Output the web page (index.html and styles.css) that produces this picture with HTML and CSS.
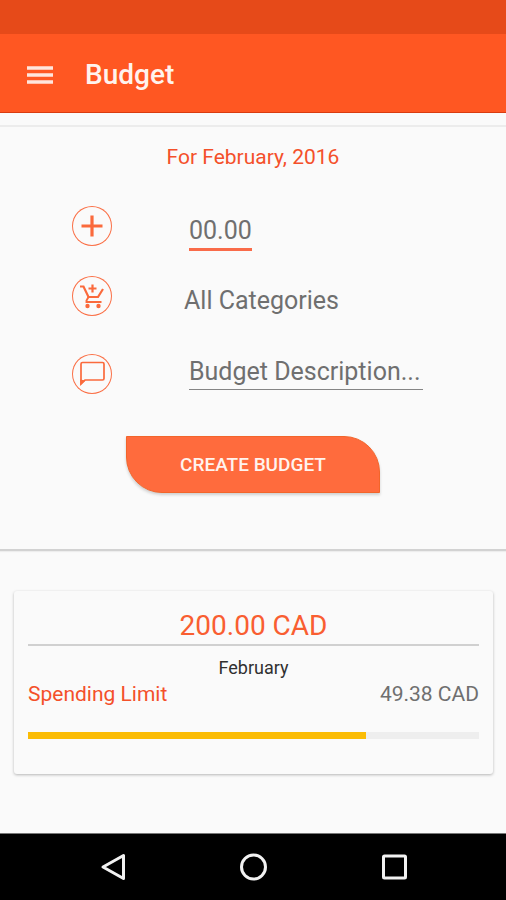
FILE: index.html
```html
<!DOCTYPE html>
<html lang="en">
<head>
<meta charset="utf-8">
<meta name="viewport" content="width=device-width, initial-scale=1">
<title>Budget</title>
<link rel="stylesheet" href="styles.css">
</head>
<body>
<div class="status-bar"></div>
<header class="app-bar">
  <button class="menu-button" type="button" aria-label="Open menu">
    <svg width="28" height="20" viewBox="0 0 28 20"><path d="M1 3h26M1 10h26M1 17h26" stroke="#ffe6dd" stroke-width="3.4"/></svg>
  </button>
  <h1 class="app-title">Budget</h1>
</header>
<main class="content">
  <form class="budget-form">
    <h2 class="form-title">For February, 2016</h2>
    <div class="fields">
      <div class="field field-amount">
        <label class="field-icon" for="amount" aria-label="Amount">
          <svg width="40" height="40" viewBox="0 0 40 40"><path d="M20 9.5v21M9.5 20h21" stroke-width="3.2"/></svg>
        </label>
        <input class="text-input amount-input" id="amount" type="text" inputmode="decimal" placeholder="00.00">
      </div>
      <div class="field field-category">
        <label class="field-icon" for="category" aria-label="Category">
          <svg width="40" height="40" viewBox="0 0 40 40">
            <path d="M8 10.500h3.500l5 10.500h9.500l5-8" stroke-width="2.200"/>
            <path d="M16.500 21l-2 3.500v1.500h15" stroke-width="1.900"/>
            <path d="M20.500 8.500v8M16.500 12.500h8" stroke-width="2.200"/>
            <circle class="wheel" cx="15.500" cy="30" r="2.200"/><circle class="wheel" cx="26.500" cy="30" r="2.200"/>
          </svg>
        </label>
        <select class="category-select" id="category"><option>All Categories</option></select>
      </div>
      <div class="field">
        <label class="field-icon" for="description" aria-label="Description">
          <svg width="40" height="40" viewBox="0 0 40 40"><path d="M9 30V10q0-1.500 1.500-1.500h20q1.500 0 1.500 1.500v14.500q0 1.500-1.500 1.500H13z" stroke-width="1.700"/><path class="wheel" d="M8.200 25.500v6l5.500-5z"/></svg>
        </label>
        <input class="text-input description-input" id="description" type="text" placeholder="Budget Description...">
      </div>
    </div>
    <button class="create-button" type="button">CREATE BUDGET</button>
  </form>
  <section class="budget-card">
    <h2 class="card-total">200.00 CAD</h2>
    <p class="card-month">February</p>
    <div class="card-limit"><span class="limit-label">Spending Limit</span><span class="limit-value">49.38 CAD</span></div>
    <div class="progress" role="progressbar" aria-label="Budget spent" aria-valuenow="75" aria-valuemin="0" aria-valuemax="100"><div class="progress-fill" style="width: 75%"></div></div>
  </section>
</main>
<nav class="system-nav" aria-label="System">
  <button class="nav-button" type="button" aria-label="Back"><svg width="30" height="30" viewBox="0 0 30 30"><path d="M26.500 3.500v23L6 15z"/></svg></button>
  <button class="nav-button" type="button" aria-label="Home"><svg width="30" height="30" viewBox="0 0 30 30"><circle cx="15.500" cy="15" r="12"/></svg></button>
  <button class="nav-button" type="button" aria-label="Recent apps"><svg width="30" height="30" viewBox="0 0 30 30"><rect x="4.500" y="4" width="22" height="22" rx="1"/></svg></button>
</nav>
</body>
</html>
```
FILE: styles.css
```css
* {
  box-sizing: border-box;
}

body {
  margin: 0;
  min-height: 100vh;
  display: flex;
  flex-direction: column;
  background: #fafafa;
  color: #6f6f6f;
  font-family: Roboto, "Liberation Sans", sans-serif;
}

h1, h2, p {
  margin: 0;
  font-weight: 400;
}

button {
  padding: 0;
  border: 0;
  background: none;
  font-family: inherit;
}

svg {
  display: block;
}

.status-bar {
  height: 34px;
  background: #e64a19;
}

.app-bar {
  display: flex;
  align-items: center;
  gap: 31px;
  height: 79px;
  padding: 3px 26px 0;
  background: #ff5722;
  border-bottom: 1px solid #d93c10;
}

.app-title {
  color: #fff3ee;
  font-size: 28px;
  line-height: 32px;
  font-weight: 500;
}

.content {
  flex: 1;
  padding-top: 12px;
}

.budget-form {
  display: flex;
  flex-direction: column;
  align-items: center;
  padding: 18px 72px 56px;
  border-top: 2px solid #ececec;
  border-bottom: 2px solid #d2d2d2;
  box-shadow: 0 1px 1px #ededed;
}

.form-title {
  color: #f4502a;
  font-size: 21px;
  line-height: 24px;
}

.fields {
  align-self: stretch;
  margin: 37px 0 42px;
}

.field {
  display: flex;
  align-items: flex-start;
  gap: 72px;
}

.field-icon {
  flex: none;
  border-radius: 50%;
  box-shadow: inset 0 0 0 1px #fa7047;
}

.field-icon svg {
  fill: none;
  stroke: #fa6a3c;
}

.field-icon .wheel {
  fill: #fa6a3c;
  stroke: none;
}

.field-amount {
  height: 70px;
}

.field-category {
  height: 78px;
}

.text-input,
.category-select {
  min-width: 0;
  height: 36px;
  padding: 0;
  border: 0;
  border-radius: 0;
  outline: 0;
  background: transparent;
  color: #6f6f6f;
  font-family: inherit;
  font-size: 25px;
}

.text-input {
  margin-left: 5px;
}

.text-input::placeholder {
  color: #6f6f6f;
  opacity: 1;
}

.amount-input {
  width: 63px;
  height: 39px;
  margin-top: 6px;
  border-bottom: 3px solid #f96b49;
}

.category-select {
  margin-top: 6px;
  appearance: none;
}

.description-input {
  width: 234px;
  border-bottom: 1px solid #858585;
}

.create-button {
  width: 70%;
  height: 57px;
  border: 1px solid #f2652a;
  border-radius: 0 36px 0 36px;
  background: #ff6b3d;
  box-shadow: 0 2px 3px #cfcfcf;
  color: #fff3ee;
  font-size: 19px;
  font-weight: 500;
}

.budget-card {
  margin: 40px 13px 40px 14px;
  padding: 18px 14px 35px;
  border-radius: 3px;
  background: #fafafa;
  box-shadow: 0 1px 3px #b5b5b5;
}

.card-total {
  padding-bottom: 1px;
  border-bottom: 2px solid #d0d0d0;
  color: #f95e31;
  font-size: 28px;
  line-height: 34px;
  text-align: center;
}

.card-month {
  padding-top: 10px;
  color: #303030;
  font-size: 18px;
  line-height: 24px;
  text-align: center;
}

.card-limit {
  display: flex;
  justify-content: space-between;
  font-size: 21px;
  line-height: 29px;
}

.limit-label {
  color: #f4502a;
}

.progress {
  height: 7px;
  margin-top: 23px;
  background: #eee;
}

.progress-fill {
  height: 100%;
  background: #fbbc05;
}

.system-nav {
  display: flex;
  justify-content: space-between;
  align-items: center;
  height: 67px;
  padding: 0 97px;
  border-top: 1px solid #777;
  background: #000;
}

.nav-button svg {
  fill: none;
  stroke: #f2f2f2;
  stroke-width: 3;
  stroke-linejoin: round;
}
```
